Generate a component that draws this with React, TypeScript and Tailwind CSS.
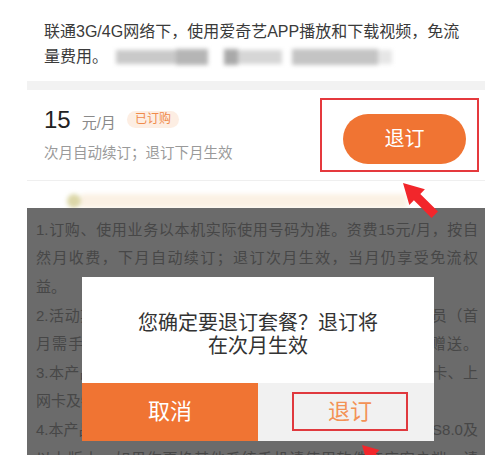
import React from 'react'

const font = 'font-["Liberation_Sans","Noto_Sans_CJK_SC",sans-serif]'

const Arrow = ({ className }: { className: string }) => (
  <svg className={className} viewBox="0 0 40 40" width="40" height="40">
    <polygon points="0,0 21.9,6.3 17.3,10.9 35,28.6 28.6,35 10.9,17.3 6.3,21.9" fill="#f2262b" />
  </svg>
)

// lines of the rules text behind the dialog (full lines are justified)
const rules: { text: string; full: boolean }[] = [
  { text: '1.订购、使用业务以本机实际使用号码为准。资费15元/月，按自', full: true },
  { text: '然月收费，下月自动续订；退订次月生效，当月仍享受免流权', full: true },
  { text: '益。', full: false },
  { text: '2.活动期间成功订购的新用户可免费获赠爱奇艺黄金VIP会员（首', full: true },
  { text: '月需手动领取），领取成功后次月起每月系统将自动为您赠送。', full: true },
  { text: '3.本产品仅适用于中国联通3G/4G手机卡，物联网卡、数据卡、上', full: true },
  { text: '网卡及物联网卡等不参与本活动。', full: false },
  { text: '4.本产品支持爱奇艺安卓客户端5.0及以上版本、iPhone版iOS8.0及', full: true },
  { text: '以上版本，如果你更换其他系统手机请使用软件商店客户端，请', full: true },
]

export default function App() {
  return (
    <div className={`w-[497px] h-[465px] bg-white overflow-hidden relative ${font}`}>
      <div className="ml-[27px] w-[458px]">
        {/* intro */}
        <p className="pl-[17px] pr-[14px] pt-[20px] text-[16px] leading-[24px] text-[#3a3a3a]">
          联通3G/4G网络下，使用爱奇艺APP播放和下载视频，免流
          <br />
          <span className="inline-flex items-center align-middle">
            量费用。
            <span className="flex items-center h-[16px] ml-[8px] blur-[2px]">
              <span className="w-[60px] h-[14px] bg-[#c9c9c9]" />
              <span className="w-[32px] h-[16px] bg-[#b5b5b5]" />
              <span className="w-[16px] h-[14px] bg-white" />
              <span className="w-[14px] h-[16px] bg-[#a9a9a9]" />
              <span className="w-[44px] h-[14px] bg-[#d6d6d6]" />
              <span className="w-[10px] h-[14px] bg-white" />
              <span className="w-[86px] h-[16px] bg-[#c4c4c4]" />
              <span className="w-[14px] h-[14px] bg-[#e6e6e6]" />
            </span>
          </span>
        </p>

        <div className="mt-[12px] h-[9px] bg-[#f2f2f2]" />

        {/* package row */}
        <div className="h-[91px] flex items-center justify-between border-b border-[#efefef]">
          <div className="pl-[17px] flex flex-col">
            <div className="flex items-center h-[28px]">
              <div className="flex items-baseline">
                <span className="text-[24px] text-[#222]">15</span>
                <span className="ml-[11px] text-[15px] text-[#8a8a8a]">元/月</span>
              </div>
              <span className="ml-[11px] h-[17px] px-[8px] rounded-full bg-[#fdeee3] text-[12px] leading-[17px] text-[#f08a4b]">
                已订购
              </span>
            </div>
            <div className="mt-[8px] text-[14.5px] leading-[22px] text-[#9a9a9a]">次月自动续订；退订下月生效</div>
          </div>
          <div className="mr-[6px] border-2 border-[#e5393d] pt-[14px] pb-[6px] pl-[21px] pr-[11px]">
            <button className="w-[123px] h-[50px] rounded-full bg-[#f07433] text-white text-[20px]">退订</button>
          </div>
        </div>

        {/* blurred banner */}
        <div className="h-[27px] flex items-end">
          <div className="ml-[40px] w-[340px] h-[14px] flex blur-[2px]">
            <span className="w-[14px] h-[14px] rounded-full bg-[#dcd7a8]" />
            <span className="flex-1 bg-[#fbf1e4]" />
          </div>
        </div>

        {/* dimmed rules + dialog */}
        <div className="relative h-[247px] overflow-hidden bg-[#6b6b6b] pt-[8px] pl-[9px] pr-[7px]">
          {rules.map((r, i) => (
            <div
              key={i}
              className={`text-[15px] leading-[28.6px] text-[#474747] whitespace-nowrap ${r.full ? 'text-justify [text-align-last:justify]' : ''}`}
            >
              {r.text}
            </div>
          ))}

          <Arrow className="absolute left-[335px] top-[237px] w-[32px] h-[32px]" />

          <div className="absolute left-[55px] top-[69px] w-[352px] bg-white">
            <div className="h-[106px] pt-[35px] text-center text-[20px] leading-[23px] text-[#333]">
              您确定要退订套餐？退订将
              <br />
              在次月生效
            </div>
            <div className="grid grid-cols-2 h-[58px]">
              <button className="bg-[#f07433] text-white text-[22px]">取消</button>
              <div className="bg-[#f1f1f1] flex items-center justify-center">
                <div className="ml-[8px] w-[116px] h-[39px] border-2 border-[#e0393e] flex items-center justify-center text-[22px] text-[#f39256]">
                  退订
                </div>
              </div>
            </div>
          </div>
        </div>
      </div>

      <Arrow className="absolute left-[403px] top-[183px]" />
    </div>
  )
}
